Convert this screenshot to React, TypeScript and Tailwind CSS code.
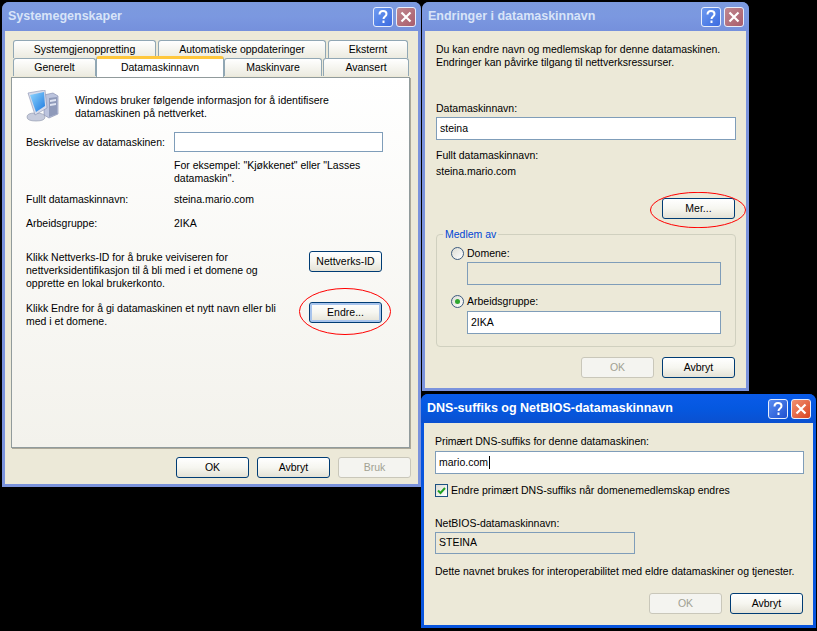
import type { ReactNode } from "react";

const font = "font-['Liberation_Sans',Arial,sans-serif] text-[10.5px] leading-[13px] text-black";

function TitleButton({ kind, active }: { kind: "help" | "close"; active: boolean }) {
  const bg =
    kind === "help"
      ? active
        ? "bg-gradient-to-br from-[#5a8cf0] to-[#1f4fd0]"
        : "bg-gradient-to-br from-[#6f9bf0] to-[#3c6ae0]"
      : active
        ? "bg-gradient-to-br from-[#f09070] to-[#d8401c]"
        : "bg-gradient-to-br from-[#c08890] to-[#a85c6c]";
  return (
    <div className={`flex h-[20px] w-[20px] items-center justify-center rounded-[3px] border border-[#e8eefc] ${bg}`}>
      <svg width="14" height="14" viewBox="0 0 14 14">
        {kind === "help" ? (
          <path d="M3.5 4.5 C3.5 2 5 1 7 1 C9.5 1 10.5 2.5 10.5 4 C10.5 6.5 7.5 6.5 7.5 9 M7.5 10.5 V13" fill="none" stroke="white" strokeWidth="2" />
        ) : (
          <path d="M2.5 2.5 L11.5 11.5 M11.5 2.5 L2.5 11.5" fill="none" stroke="white" strokeWidth="2.2" />
        )}
      </svg>
    </div>
  );
}

function XpWindow({ title, active = false, className, children }: { title: string; active?: boolean; className: string; children: ReactNode }) {
  const frame = active ? "bg-[#0855dd]" : "bg-[#7b93dc]";
  const bar = active
    ? "bg-gradient-to-b from-[#0a5be8] via-[#0558e0] to-[#0a50d0]"
    : "bg-gradient-to-b from-[#7c9ade] via-[#7b98e0] to-[#7590dc]";
  return (
    <div className={`absolute flex flex-col overflow-hidden rounded-t-[7px] ${frame} ${className}`}>
      <div className={`flex h-[29px] shrink-0 items-center justify-between pl-[6px] pr-[5px] ${bar}`}>
        <span className={`font-['Liberation_Sans',Arial,sans-serif] text-[12.5px] font-bold ${active ? "text-white" : "text-[#d8e4f8]"}`}>{title}</span>
        <div className="flex gap-[3px]">
          <TitleButton kind="help" active={active} />
          <TitleButton kind="close" active={active} />
        </div>
      </div>
      <div className={`mx-[3px] mb-[3px] flex min-h-0 flex-1 flex-col bg-[#ece9d8] ${font}`}>{children}</div>
    </div>
  );
}

function Button({ children, disabled, focused, className = "" }: { children: ReactNode; disabled?: boolean; focused?: boolean; className?: string }) {
  if (disabled) {
    return <div className={`flex h-[21px] w-[73px] items-center justify-center rounded-[3px] border border-[#c9c7ba] bg-[#f4f4f0] text-[#a1a192] ${className}`}>{children}</div>;
  }
  return (
    <div className={`flex h-[21px] w-[73px] items-center justify-center rounded-[3px] border border-[#003c74] bg-gradient-to-b from-white via-[#f6f6f0] to-[#e4e2d6] ${focused ? "shadow-[inset_0_0_0_2px_#a8c4ec]" : ""} ${className}`}>
      {children}
    </div>
  );
}

function TextBox({ value, className = "", disabled, caret }: { value?: string; className?: string; disabled?: boolean; caret?: boolean }) {
  return (
    <div className={`flex items-center border border-[#7f9db9] pb-[1px] pl-[3px] ${disabled ? "bg-[#ece9d8]" : "bg-white"} ${className}`}>
      {value}
      {caret && <span className="ml-[1px] h-[13px] w-px bg-black" />}
    </div>
  );
}

function Tab({ label, width, active }: { label: string; width: string; active?: boolean }) {
  if (active) {
    return (
      <div className={`relative z-10 -mt-[2px] flex h-[21px] items-center justify-center rounded-t-[3px] border-x border-[#91a7b4] border-t-[3px] border-t-[#ffc73c] bg-white pb-[1px] ${width}`}>
        {label}
      </div>
    );
  }
  return (
    <div className={`flex h-[18px] items-center justify-center rounded-t-[3px] border-x border-t border-[#91a7b4] bg-gradient-to-b from-white to-[#ecebe0] ${width}`}>
      {label}
    </div>
  );
}

function Ellipse({ className }: { className: string }) {
  return (
    <svg className={`absolute ${className}`} viewBox="0 0 100 100" preserveAspectRatio="none">
      <ellipse cx="50" cy="50" rx="49.5" ry="49" fill="none" stroke="#ff0000" strokeWidth="1" vectorEffect="non-scaling-stroke" />
    </svg>
  );
}

function ComputerIcon() {
  return (
    <svg width="33" height="33" viewBox="0 0 33 33" className="shrink-0">
      <defs>
        <linearGradient id="screen" x1="0" y1="0" x2="1" y2="1">
          <stop offset="0" stopColor="#8fd6ff" />
          <stop offset="1" stopColor="#1f7ae0" />
        </linearGradient>
      </defs>
      <path d="M18 5 L27 3 L32 6 V24 L23 28 L18 25 Z" fill="#bcc4de" stroke="#7d87a8" strokeWidth="0.6" />
      <path d="M23 8 L31 7 V24 L23 27 Z" fill="#8f9aba" />
      <path d="M24 10 L30 9 V11 L24 12 Z M24 14 L30 13 V15 L24 16 Z" fill="#dfe4f2" />
      <path d="M1 27 Q1 23 9 23 Q19 23 19 27 Q19 31 10 31 Q1 31 1 27 Z" fill="#c6cbdc" stroke="#8a92a8" strokeWidth="0.6" />
      <path d="M2 3 L19 0 L21 18 L9 25 Z" fill="#d7dcec" stroke="#8890b0" strokeWidth="0.6" />
      <path d="M4 5 L18 2 L19 16 L10 22 Z" fill="url(#screen)" />
    </svg>
  );
}

function Radio({ checked }: { checked?: boolean }) {
  return (
    <span className="flex h-[13px] w-[13px] shrink-0 items-center justify-center rounded-full border border-[#3c5a7e] bg-gradient-to-br from-[#dcdcd4] to-white">
      {checked && <span className="h-[5px] w-[5px] rounded-full bg-[#2fa72f]" />}
    </span>
  );
}

export default function App() {
  return (
    <div className="relative h-[631px] w-[817px] overflow-hidden bg-black">
      <XpWindow title="Systemegenskaper" className="left-[2px] top-[2px] h-[485px] w-[419px]">
        <div className="flex flex-col pl-[6px] pr-[8px]">
          <div className="mt-[9px] flex gap-[2px] pl-[2px]">
            <Tab label="Systemgjenoppretting" width="w-[143px]" />
            <Tab label="Automatiske oppdateringer" width="w-[168px]" />
            <Tab label="Eksternt" width="w-[80px]" />
          </div>
          <div className="flex pl-[2px]">
            <Tab label="Generelt" width="w-[83px]" />
            <Tab label="Datamaskinnavn" width="w-[128px]" active />
            <Tab label="Maskinvare" width="w-[98px]" />
            <Tab label="Avansert" width="w-[86px] ml-px" />
          </div>
          <div className="flex h-[371px] flex-col border border-[#919b9c] bg-gradient-to-b from-white to-[#f3f2ec] pl-[14px] pr-[27px] shadow-[1px_1px_0_#aca899]">
            <div className="mt-[12px] flex gap-[16px]">
              <ComputerIcon />
              <p className="mt-[4px]">
                Windows bruker følgende informasjon for å identifisere
                <br />
                datamaskinen på nettverket.
              </p>
            </div>
            <div className="mt-[9px] grid grid-cols-[148px_1fr] items-center">
              <span>Beskrivelse av datamaskinen:</span>
              <TextBox className="h-[20px] w-[209px]" />
              <p className="col-start-2 mt-[7px]">
                For eksempel: "Kjøkkenet" eller "Lasses
                <br />
                datamaskin".
              </p>
              <span className="mt-[8px]">Fullt datamaskinnavn:</span>
              <span className="mt-[8px]">steina.mario.com</span>
              <span className="mt-[11px]">Arbeidsgruppe:</span>
              <span className="mt-[11px]">2IKA</span>
            </div>
            <div className="mt-[21px] flex items-start justify-between">
              <p>
                Klikk Nettverks-ID for å bruke veiviseren for
                <br />
                nettverksidentifikasjon til å bli med i et domene og
                <br />
                opprette en lokal brukerkonto.
              </p>
              <Button>Nettverks-ID</Button>
            </div>
            <div className="mt-[12px] flex items-start justify-between">
              <p>
                Klikk Endre for å gi datamaskinen et nytt navn eller bli
                <br />
                med i et domene.
              </p>
              <Button focused>Endre...</Button>
            </div>
          </div>
          <div className="mt-[9px] flex justify-end gap-[8px]">
            <Button>OK</Button>
            <Button>Avbryt</Button>
            <Button disabled className="-mr-[1px]">Bruk</Button>
          </div>
        </div>
      </XpWindow>

      <XpWindow title="Endringer i datamaskinnavn" className="left-[422px] top-[2px] h-[389px] w-[327px]">
        <div className="flex flex-col pl-[11px] pr-[11px]">
          <p className="mt-[12px]">
            Du kan endre navn og medlemskap for denne datamaskinen.
            <br />
            Endringer kan påvirke tilgang til nettverksressurser.
          </p>
          <span className="mt-[33px]">Datamaskinnavn:</span>
          <TextBox value="steina" className="mt-[2px] h-[23px] w-[300px]" />
          <span className="mt-[9px]">Fullt datamaskinnavn:</span>
          <span className="mt-[3px]">steina.mario.com</span>
          <Button className="mt-[20px] self-end">Mer...</Button>
          <fieldset className="mt-[9px] h-[119px] w-[300px] rounded-[4px] border border-[#d0d0bf] pl-[15px] pr-[14px]">
            <legend className="-ml-[9px] px-[2px] text-[#0046d5]">Medlem av</legend>
            <div className="mt-[6px] flex items-center gap-[3px] -ml-[1px]">
              <Radio />
              <span>Domene:</span>
            </div>
            <TextBox disabled className="ml-[15px] mt-[2px] h-[23px] w-[254px]" />
            <div className="mt-[10px] flex items-center gap-[3px] -ml-[1px]">
              <Radio checked />
              <span>Arbeidsgruppe:</span>
            </div>
            <TextBox value="2IKA" className="ml-[15px] mt-[3px] h-[23px] w-[254px]" />
          </fieldset>
          <div className="mt-[10px] flex justify-end gap-[8px]">
            <Button disabled>OK</Button>
            <Button>Avbryt</Button>
          </div>
        </div>
      </XpWindow>

      <XpWindow title="DNS-suffiks og NetBIOS-datamaskinnavn" active className="left-[421px] top-[394px] h-[234px] w-[395px]">
        <div className="flex flex-col pl-[11px] pr-[10px]">
          <span className="mt-[12px]">Primært DNS-suffiks for denne datamaskinen:</span>
          <TextBox value="mario.com" caret className="mt-[3px] h-[23px] w-[369px]" />
          <div className="mt-[10px] flex items-center gap-[3px]">
            <span className="flex h-[13px] w-[13px] items-center justify-center border border-[#1c5180] bg-gradient-to-br from-[#dcdcd4] to-white">
              <svg width="9" height="9" viewBox="0 0 9 9">
                <path d="M1 4.5 L3.5 7 L8 2" fill="none" stroke="#21a121" strokeWidth="2" />
              </svg>
            </span>
            <span>Endre primært DNS-suffiks når domenemedlemskap endres</span>
          </div>
          <span className="mt-[20px]">NetBIOS-datamaskinnavn:</span>
          <TextBox value="STEINA" disabled className="mt-[2px] h-[22px] w-[200px]" />
          <span className="mt-[11px]">Dette navnet brukes for interoperabilitet med eldre datamaskiner og tjenester.</span>
          <div className="mt-[15px] flex justify-end gap-[8px]">
            <Button disabled>OK</Button>
            <Button>Avbryt</Button>
          </div>
        </div>
      </XpWindow>

      <Ellipse className="left-[299px] top-[288px] h-[47px] w-[92px]" />
      <Ellipse className="left-[650px] top-[192px] h-[36px] w-[96px]" />
    </div>
  );
}
